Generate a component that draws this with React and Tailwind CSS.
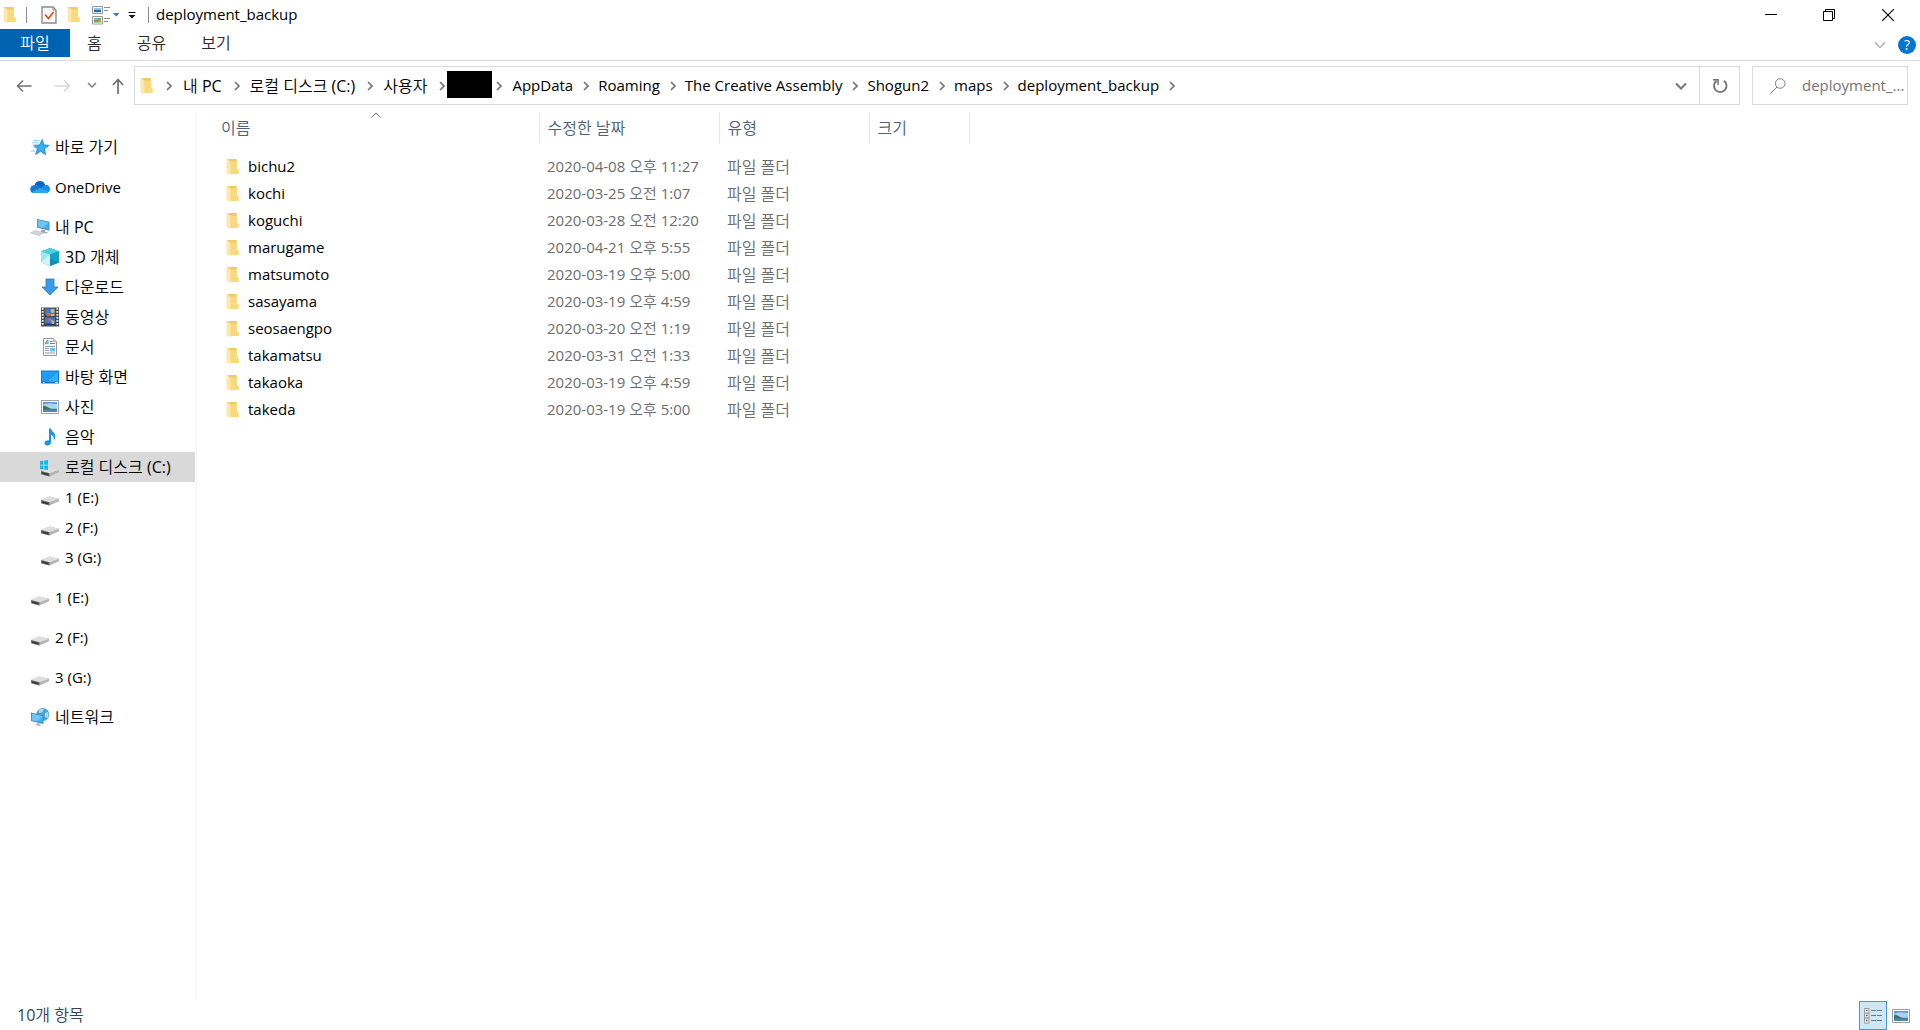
import { useState } from "react";

const folders = [
  { name: "bichu2", date: "2020-04-08 오후 11:27" },
  { name: "kochi", date: "2020-03-25 오전 1:07" },
  { name: "koguchi", date: "2020-03-28 오전 12:20" },
  { name: "marugame", date: "2020-04-21 오후 5:55" },
  { name: "matsumoto", date: "2020-03-19 오후 5:00" },
  { name: "sasayama", date: "2020-03-19 오후 4:59" },
  { name: "seosaengpo", date: "2020-03-20 오전 1:19" },
  { name: "takamatsu", date: "2020-03-31 오전 1:33" },
  { name: "takaoka", date: "2020-03-19 오후 4:59" },
  { name: "takeda", date: "2020-03-19 오후 5:00" },
];

const isHangul = (label) => /[가-힣]/.test(label);

// Hangul needs one size up to look as large as the latin labels
const labelSize = (label) => (isHangul(label) ? "text-base" : "text-[15px]");

function FolderIcon() {
  return (
    <svg width="13" height="18" viewBox="0 0 13 18" className="shrink-0" aria-hidden="true">
      <path d="M1 1h9.500v10l2 .8V16H4z" fill="#f6d272" />
      <path d="M3 1h7.500v9.500H3z" fill="#f1c968" />
      <path d="M4.500 3.500h6v7.500l2 .8V16H4.500z" fill="#f9d97f" />
      <path d="M.500 1l4 2.500v13.500L3.500 17.500 2.800 16 .500 15.500z" fill="#fde8ab" />
    </svg>
  );
}

function StarIcon() {
  return (
    <svg width="20" height="18" viewBox="0 0 20 18" aria-hidden="true">
      <path d="M12.300 1.500l1.400 5.300 5.300.6-4.600 3.200 1.100 5.900-4.900-3.300-5 3.300 2-5.600-3.900-3.400 5.800-.5z" fill="#35aef2" stroke="#1278c4" strokeWidth=".8" />
      <path d="M3 2.500h6.500M2 4.700h6M3.500 7h3M1 13h4" stroke="#8ccdf5" strokeWidth="1.100" />
    </svg>
  );
}

function CloudIcon() {
  return (
    <svg width="20" height="14" viewBox="0 0 20 14" aria-hidden="true">
      <path d="M4.500 5.500a5.500 5.500 0 0 1 10.500-1l1.500 2-6 4z" fill="#0a64c0" />
      <path d="M7.500 5.200l6 3.600L3 13A4 4 0 0 1 4.300 5.200c1-.4 2.200-.4 3.200 0z" fill="#1479d4" />
      <path d="M12 7.500c.8-1.700 2-2.800 3.500-2.800A4.300 4.300 0 0 1 20 9.200c0 2.400-1.700 3.800-3.800 3.800L9 10z" fill="#1490df" />
      <path d="M1.500 12.200l8.500-4.300 8.800 3.700c-.7.900-1.600 1.400-2.800 1.400H4.300c-1.200 0-2-.2-2.800-.8z" fill="#28a8ea" />
    </svg>
  );
}

function ComputerIcon() {
  return (
    <svg width="20" height="18" viewBox="0 0 20 18" aria-hidden="true">
      <path d="M7 1l12.500 2.800v9L7 9.500z" fill="#5c7f99" />
      <path d="M7.800 2l10.900 2.500v7.200L7.800 8.800z" fill="#3fb0f6" />
      <path d="M7.800 2l10.900 2.500-6 5.600-4.900-1.300z" fill="#6cc6fa" />
      <path d="M12 11.500l3 .8v1.400l3 .8-1.500 1-6-1.600z" fill="#9aa5ae" />
      <path d="M.500 14.700l5.500-2 7.500 2.300-4.500 2.500z" fill="#d3d9df" stroke="#a9b2ba" strokeWidth=".6" />
    </svg>
  );
}

function CubeIcon() {
  return (
    <svg width="20" height="20" viewBox="0 0 20 20" aria-hidden="true">
      <path d="M10 1l9 3.200v11.300L10 19l-9-3.500V4.200z" fill="#24b1cc" />
      <path d="M10 1l9 3.200L10 7.500 1 4.200z" fill="#4fd0df" />
      <path d="M1 4.200l9 3.300V19l-9-3.500z" fill="#9ce8ec" />
      <path d="M10 7.500V19L1 15.500z" fill="#d0f4f3" />
      <path d="M10 7.500l9-3.300v11.300L10 19z" fill="#12a3c4" />
      <path d="M10 19l9-3.500-9-4z" fill="#1789ac" />
    </svg>
  );
}

function DownloadIcon() {
  return (
    <svg width="20" height="18" viewBox="0 0 20 18" aria-hidden="true">
      <path d="M6 1h8v8h4l-8 8-8-8h4z" fill="#3a9bea" stroke="#2176bf" strokeWidth=".8" />
    </svg>
  );
}

function VideoIcon() {
  return (
    <svg width="20" height="20" viewBox="0 0 20 20" aria-hidden="true">
      <path d="M1 .500h18v19H1z" fill="#4a4a4a" />
      <path d="M2.700 1v18M17.300 1v18" stroke="#f4f4f4" strokeWidth="1.800" strokeDasharray="1.700 1.300" />
      <path d="M5 1.500h10v8H5zM5 10.500h10v8H5z" fill="#3c78d8" />
      <path d="M5 7.500h10v2H5zM5 16.500h10v2H5z" fill="#2a3d66" />
      <circle cx="12.500" cy="4" r="2" fill="#f0b73c" />
      <path d="M6.500 6h3.500v3H6.500zM8 11.500h3v2H8z" fill="#e0653a" />
      <path d="M10.500 7h4v2h-4zM11 13l3 1v3h-2z" fill="#e8b23a" />
    </svg>
  );
}

function DocumentIcon() {
  return (
    <svg width="20" height="20" viewBox="0 0 20 20" aria-hidden="true">
      <path d="M3.500 1.500h10l3 3v14h-13z" fill="#fff" stroke="#8f9aa3" />
      <path d="M13.500 1.500v3h3" fill="#dfe5ea" stroke="#8f9aa3" strokeWidth=".8" />
      <path d="M5 7.500l2-4h1v4M5.500 6h2.500M10 4.500h2.500M10 6.500h5" stroke="#2d9be0" fill="none" />
      <path d="M5 9.500h10M5 11.500h4M5 13.500h4M5 16h10" stroke="#8a9aa6" />
      <path d="M10 11h5v3.500h-5z" fill="#71bde8" />
    </svg>
  );
}

function DesktopIcon() {
  return (
    <svg width="20" height="16" viewBox="0 0 20 16" aria-hidden="true">
      <path d="M1 1.500h18v13H1z" fill="#1279cf" />
      <path d="M2 2.500h16v10H2z" fill="#1c9dfa" />
      <path d="M18 2.500v10H8z" fill="#37aeff" />
      <path d="M3 13.500h1.500M15 13.500h3" stroke="#fff" strokeWidth=".8" />
    </svg>
  );
}

function PictureIcon() {
  return (
    <svg width="20" height="16" viewBox="0 0 20 16" aria-hidden="true">
      <path d="M1.500 1.500h17v13h-17z" fill="#fff" stroke="#9aa0a5" />
      <path d="M3 3h14v10H3z" fill="#a9d3f2" />
      <path d="M3 3h14v2L9 4.200 3 5.500z" fill="#5c98dc" />
      <path d="M3 6.500c3 0 5 2.500 8.500 3.300H17V11H3z" fill="#3f7468" />
      <path d="M3 10.500h14V13H3z" fill="#4d87ad" />
    </svg>
  );
}

function MusicIcon() {
  return (
    <svg width="20" height="18" viewBox="0 0 20 18" aria-hidden="true">
      <path d="M9 0.500h2c.3 3 4.300 4 4.300 7.800 0 1.600-.6 2.900-1.500 4 .3-2.800-.5-4.800-2.800-5.500v7.200c0 2-1.700 3.500-3.700 3.500-1.700 0-2.800-.9-2.800-2.200 0-1.800 2-3.200 4.500-2.900z" fill="#1893e8" />
    </svg>
  );
}

function DriveShape() {
  return (
    <>
      <path d="M1 8L9.500 4.500l9.500 2.200v2.600L9.500 13.500 1 11.300z" fill="#b4b4b4" />
      <path d="M1 8l8.500-3.500L19 6.700l-9.500 3.500z" fill="#dedede" />
      <path d="M1 8l8.500 2.200v3.300L1 11.300z" fill="#6f6f6f" />
      <path d="M2 9.200l6.500 1.600v1.600L2 10.800z" fill="#343434" />
    </>
  );
}

function DriveIcon() {
  return (
    <svg width="20" height="10" viewBox="0 4 20 10" className="mt-2" aria-hidden="true">
      <DriveShape />
    </svg>
  );
}

function SystemDriveIcon() {
  return (
    <svg width="20" height="17" viewBox="0 -3 20 17" className="mt-[2px]" aria-hidden="true">
      <DriveShape />
      <path d="M0-1.800l3.500-.5v4H0zM4.300-2.400L8-3v4.700H4.300zM0 2.500h3.500v4L0 6zM4.300 2.500H8v4.600L4.300 6.600z" fill="#17b5ea" />
    </svg>
  );
}

function NetworkIcon() {
  return (
    <svg width="20" height="20" viewBox="0 0 20 20" aria-hidden="true">
      <circle cx="12.800" cy="7.500" r="6.500" fill="#4fa3cc" />
      <path d="M9 3c2-1.500 4-1.500 5-.500L12 5.500 9 6zM15 6l3-1c1 2 .8 4-.5 6L15 10z" fill="#a9dbea" />
      <path d="M1 5.500l12.500 3v8.500L1 14z" fill="#3b83b8" />
      <path d="M1.800 6.600l10.900 2.600v6.600L1.800 13.300z" fill="#3fb4f8" />
      <path d="M1.800 6.600l10.900 2.600-6 5-4.900-1z" fill="#6ac8fb" />
      <path d="M7 15.500l2.500.6v1.400l2 .7-2 1-5-1.500 2.500-.6z" fill="#b0bac2" />
    </svg>
  );
}

function Chevron({ className }) {
  return (
    <svg width="6" height="10" viewBox="0 0 6 10" className={className} aria-hidden="true">
      <path d="M1 1l4 4-4 4" fill="none" stroke="#767676" strokeWidth="1.700" />
    </svg>
  );
}

function Down({ color = "#767676", width = 1.7 }) {
  return (
    <svg width="12" height="8" viewBox="0 0 12 8" aria-hidden="true">
      <path d="M1 1.500l5 5 5-5" fill="none" stroke={color} strokeWidth={width} />
    </svg>
  );
}

const groups = [
  [{ label: "바로 가기", icon: StarIcon }],
  [{ label: "OneDrive", icon: CloudIcon }],
  [
    { label: "내 PC", icon: ComputerIcon },
    { label: "3D 개체", icon: CubeIcon, child: true },
    { label: "다운로드", icon: DownloadIcon, child: true },
    { label: "동영상", icon: VideoIcon, child: true },
    { label: "문서", icon: DocumentIcon, child: true },
    { label: "바탕 화면", icon: DesktopIcon, child: true },
    { label: "사진", icon: PictureIcon, child: true },
    { label: "음악", icon: MusicIcon, child: true },
    { label: "로컬 디스크 (C:)", icon: SystemDriveIcon, child: true },
    { label: "1 (E:)", icon: DriveIcon, child: true },
    { label: "2 (F:)", icon: DriveIcon, child: true },
    { label: "3 (G:)", icon: DriveIcon, child: true },
  ],
  [{ label: "1 (E:)", icon: DriveIcon }],
  [{ label: "2 (F:)", icon: DriveIcon }],
  [{ label: "3 (G:)", icon: DriveIcon }],
  [{ label: "네트워크", icon: NetworkIcon }],
];

const path = ["내 PC", "로컬 디스크 (C:)", "사용자", null, "AppData", "Roaming", "The Creative Assembly", "Shogun2", "maps", "deployment_backup"];

function TitleBar() {
  return (
    <header className="flex h-[29px] items-center justify-between">
      <div className="flex items-center pl-[3px]">
        <FolderIcon />
        <span className="ml-[10px] h-4 w-px bg-[#8a8a8a]" />
        <button aria-label="속성" className="ml-[14px]">
          <svg width="16" height="18" viewBox="0 0 16 18" aria-hidden="true">
            <path d="M1 1h11l3 3v13H1z" fill="#f8f8f8" stroke="#8c8c8c" strokeWidth="1.400" />
            <path d="M12 1v3h3" fill="none" stroke="#8c8c8c" />
            <path d="M4 8.500l3.500 4 5-6.500" fill="none" stroke="#e2582a" strokeWidth="1.800" />
          </svg>
        </button>
        <button aria-label="새 폴더" className="ml-[10px]">
          <FolderIcon />
        </button>
        <button aria-label="레이아웃" className="ml-3">
          <svg width="28" height="20" viewBox="0 0 28 20" aria-hidden="true">
            <path d="M.500 1.500h10v7H.500zM.500 11.500h10v7.500H.500z" fill="#fff" stroke="#999" />
            <path d="M2 3h7v2H2z" fill="#8cc5f2" />
            <path d="M2 5h7v2.200H2z" fill="#2d6a8e" />
            <path d="M2 13h7v4.500H2z" fill="#6aa860" />
            <path d="M2 13h4v2H2z" fill="#7fb2e8" />
            <path d="M6 14.500h3v2H6z" fill="#e0903a" />
            <path d="M12 2.500h6M12 5.500h4M12 13.500h6M12 16.500h4" stroke="#8a8a8a" />
            <path d="M21 8h6.500l-3.200 3.500z" fill="#4472b0" />
          </svg>
        </button>
        <button aria-label="빠른 실행 도구 모음 사용자 지정" className="ml-2">
          <svg width="8" height="8" viewBox="0 0 8 8" aria-hidden="true">
            <path d="M.500 1.500h7" stroke="#111" />
            <path d="M.500 4h7L4 7.500z" fill="#111" />
          </svg>
        </button>
        <span className="ml-3 h-4 w-px bg-[#8a8a8a]" />
        <h1 className="ml-[7px] text-[15px]">deployment_backup</h1>
      </div>
      <div className="flex pr-[2px]">
        <button aria-label="최소화" className="flex h-7 w-[58px] items-center justify-center">
          <svg width="12" height="12" viewBox="0 0 12 12" aria-hidden="true">
            <path d="M0 5.500h12" stroke="#000" />
          </svg>
        </button>
        <button aria-label="이전 크기로 복원" className="flex h-7 w-[58px] items-center justify-center">
          <svg width="12" height="12" viewBox="0 0 12 12" fill="none" stroke="#000" aria-hidden="true">
            <path d="M.500 2.500h9v9h-9zM2.500 2.500v-2h9v9h-2" />
          </svg>
        </button>
        <button aria-label="닫기" className="flex h-7 w-[60px] items-center justify-center">
          <svg width="12" height="12" viewBox="0 0 12 12" aria-hidden="true">
            <path d="M0 0l12 12M12 0L0 12" stroke="#000" strokeWidth="1.100" />
          </svg>
        </button>
      </div>
    </header>
  );
}

function Ribbon() {
  return (
    <div className="flex h-8 justify-between border-b border-[#d9d9d9]">
      <div className="flex h-7 text-base leading-7 text-[#2b2b2b]">
        <button className="w-[70px] bg-[#0063b1] text-white">파일</button>
        <button className="px-[17px]">홈</button>
        <button className="px-[18px]">공유</button>
        <button className="px-[17px]">보기</button>
      </div>
      <div className="flex items-center gap-3 pr-1">
        <button aria-label="리본 확장">
          <Down color="#a8a8a8" width={1.2} />
        </button>
        <button aria-label="도움말" className="h-[18px] w-[18px] rounded-full bg-[#0574d4] text-sm leading-[18px] text-white">
          ?
        </button>
      </div>
    </div>
  );
}

function AddressBar() {
  return (
    <div className="flex items-center pt-[5px] pr-3">
      <nav className="flex w-[134px] items-center pl-4">
        <button aria-label="뒤로">
          <svg width="16" height="14" viewBox="0 0 16 14" fill="none" stroke="#707070" strokeWidth="1.500" aria-hidden="true">
            <path d="M15.500 7H1.500M7 1.500L1.500 7 7 12.500" />
          </svg>
        </button>
        <button aria-label="앞으로" className="ml-[23px]">
          <svg width="16" height="14" viewBox="0 0 16 14" fill="none" stroke="#d6d6d6" strokeWidth="1.500" aria-hidden="true">
            <path d="M0 7h14M9 1.500L14.500 7 9 12.500" />
          </svg>
        </button>
        <button aria-label="최근 위치" className="ml-4">
          <svg width="10" height="7" viewBox="0 0 10 7" aria-hidden="true">
            <path d="M1 1l4 4 4-4" fill="none" stroke="#808080" strokeWidth="1.500" />
          </svg>
        </button>
        <button aria-label="위로" className="ml-[15px]">
          <svg width="12" height="16" viewBox="0 0 12 16" fill="none" stroke="#707070" strokeWidth="1.700" aria-hidden="true">
            <path d="M6 16V1.500M1 7l5-5.500L11 7" />
          </svg>
        </button>
      </nav>
      <div className="flex h-[39px] min-w-0 flex-1 items-center border border-[#d9d9d9] pl-[5px]">
        <FolderIcon />
        <Chevron className="ml-[13px] mr-[11px]" />
        <div className="flex min-w-0 flex-1 items-center">
          {path.map((part) =>
            part === null ? (
              <span key="user" className="-ml-2 flex items-center">
                <span className="mb-[2px] h-[27px] w-[45px] bg-black" />
                <Chevron className="ml-1 mr-[10px]" />
              </span>
            ) : (
              <span key={part} className="flex items-center">
                <button className={`whitespace-nowrap ${labelSize(part)}`}>{part}</button>
                <Chevron className={isHangul(part) ? "ml-3 mr-[10px]" : "ml-[10px] mr-[9px]"} />
              </span>
            )
          )}
        </div>
        <button aria-label="이전 위치" className="flex w-9 items-center justify-center">
          <Down width={2} />
        </button>
        <button aria-label="새로 고침" className="flex h-full w-10 items-center justify-center border-l border-[#d9d9d9]">
          <svg width="16" height="16" viewBox="0 0 16 16" fill="none" stroke="#707070" strokeWidth="1.800" aria-hidden="true">
            <path d="M12 2.700A6.300 6.300 0 1 1 4.500 2.700" />
            <path d="M1 1.800h5v5" strokeWidth="1.500" />
          </svg>
        </button>
      </div>
      <label className="ml-3 flex h-[39px] w-[156px] items-center border border-[#d9d9d9] pl-[17px]">
        <svg width="16" height="16" viewBox="0 0 16 16" fill="none" stroke="#808080" className="shrink-0" aria-hidden="true">
          <circle cx="10.200" cy="5.500" r="4.800" />
          <path d="M7 9L.500 15.500" />
        </svg>
        <input
          type="text"
          aria-label="deployment_backup 검색"
          placeholder="deployment_..."
          className="ml-4 w-full min-w-0 text-[15px] outline-none placeholder:text-[#757575]"
        />
      </label>
    </div>
  );
}

function Sidebar() {
  const [selected, setSelected] = useState("2-8");

  return (
    <aside className="w-[197px] shrink-0 border-r border-[#f3f3f3] pt-5 pr-px">
      {groups.map((items, g) => (
        <ul key={g} className="mb-[10px]">
          {items.map(({ label, icon: Icon, child }, i) => {
            const id = `${g}-${i}`;
            return (
              <li key={id}>
                <a
                  href="#"
                  onClick={() => setSelected(id)}
                  className={`flex h-[30px] items-center gap-[5px] ${labelSize(label)} ${child ? "pl-10" : "pl-[30px]"} ${selected === id ? "bg-[#d9d9d9]" : ""}`}
                >
                  <span className="flex w-5 justify-center">
                    <Icon />
                  </span>
                  {label}
                </a>
              </li>
            );
          })}
        </ul>
      ))}
    </aside>
  );
}

function FileTable() {
  return (
    <table className="h-fit w-full table-fixed text-left text-[15px]">
      <colgroup>
        <col className="w-[342px]" />
        <col className="w-[180px]" />
        <col className="w-[150px]" />
        <col className="w-[100px]" />
        <col />
      </colgroup>
      <thead className="text-base text-[#4c607a]">
        <tr className="h-8">
          <th className="relative border-r border-[#e5e5e5] pl-6 font-normal">
            이름
            <svg width="10" height="6" viewBox="0 0 10 6" className="absolute top-0 left-[174px]" aria-hidden="true">
              <path d="M.500 5.500L5 1l4.500 4.500" fill="none" stroke="#6a6a6a" />
            </svg>
          </th>
          <th className="border-r border-[#e5e5e5] pl-2 font-normal">수정한 날짜</th>
          <th className="border-r border-[#e5e5e5] pl-2 font-normal">유형</th>
          <th className="border-r border-[#e5e5e5] pl-2 font-normal">크기</th>
          <th />
        </tr>
      </thead>
      <tbody className="text-[#6d6d6d] before:block before:h-[9px]">
        {folders.map((folder) => (
          <tr key={folder.name} className="h-[27px]">
            <td className="pl-[29px]">
              <button className="flex items-center gap-[9px] text-black">
                <FolderIcon />
                {folder.name}
              </button>
            </td>
            <td className="pl-2 whitespace-nowrap">{folder.date}</td>
            <td className="pl-2 text-base leading-5">파일 폴더</td>
            <td />
            <td />
          </tr>
        ))}
      </tbody>
    </table>
  );
}

export default function App() {
  return (
    <div className="flex min-h-screen flex-col bg-white font-['Open_Sans','Noto_Sans_CJK_KR_DemiLight','Noto_Sans_CJK_KR',sans-serif] text-black">
      <TitleBar />
      <Ribbon />
      <AddressBar />
      <main className="flex flex-1 pt-[7px]">
        <Sidebar />
        <FileTable />
      </main>
      <footer className="flex h-8 items-end justify-between pl-[17px] pr-[9px]">
        <span className="text-base leading-[30px] text-[#33445c]">10개 항목</span>
        <div className="flex items-center gap-1">
          <button aria-label="자세히" className="flex h-[29px] w-7 items-center justify-center border border-[#4a98c9] bg-[#cce8f6]">
            <svg width="18" height="16" viewBox="0 0 18 16" aria-hidden="true">
              <path d="M.500 .500h4.500v4.800H.500zM.500 5.300h4.500v4.800H.500zM.500 10.100h4.500v5H.500z" fill="#fff" stroke="#999" />
              <path d="M2 2.500h1.500M2 7.500h1.500M2 12.500h1.500" stroke="#444" strokeWidth="1.500" />
              <path d="M7 2.500h5M13 2.500h5M7 7.500h5M13 7.500h5M7 12.500h5M13 12.500h5" stroke="#777" />
            </svg>
          </button>
          <button aria-label="큰 아이콘">
            <PictureIcon />
          </button>
        </div>
      </footer>
    </div>
  );
}
